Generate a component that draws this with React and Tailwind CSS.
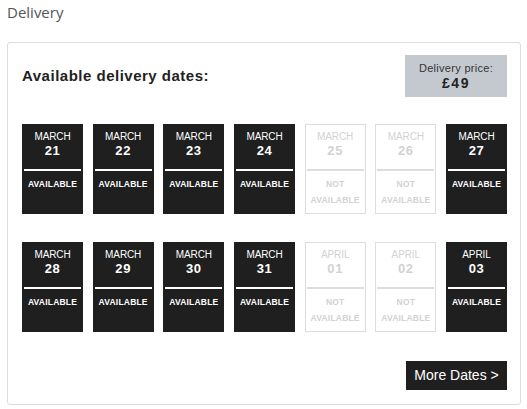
import React from "react";

const rows = [
  [
    { m: "MARCH", d: "21", a: true },
    { m: "MARCH", d: "22", a: true },
    { m: "MARCH", d: "23", a: true },
    { m: "MARCH", d: "24", a: true },
    { m: "MARCH", d: "25", a: false },
    { m: "MARCH", d: "26", a: false },
    { m: "MARCH", d: "27", a: true },
  ],
  [
    { m: "MARCH", d: "28", a: true },
    { m: "MARCH", d: "29", a: true },
    { m: "MARCH", d: "30", a: true },
    { m: "MARCH", d: "31", a: true },
    { m: "APRIL", d: "01", a: false },
    { m: "APRIL", d: "02", a: false },
    { m: "APRIL", d: "03", a: true },
  ],
];

function Tile({ m, d, a }) {
  return (
    <div
      className={
        "h-[90px] flex flex-col items-stretch text-center " +
        (a
          ? "bg-[#1f1f1f] text-white pt-[7px]"
          : "bg-white border border-[#dddddd] text-[#d2d2d2] pt-[6px]")
      }
    >
      <div className="text-[10px] leading-[12px] tracking-[-0.1px]">{m}</div>
      <div className="text-[13px] leading-[16px] font-bold tracking-[0.6px]">{d}</div>
      <div
        className={
          "mt-[10px] h-[2px] " + (a ? "bg-white mx-[2px]" : "bg-[#dddddd] mx-[1px]")
        }
      />
      <div className="mt-[5px] text-[8.5px] leading-[16px] font-bold tracking-[0.2px]">
        {a ? (
          "AVAILABLE"
        ) : (
          <>
            NOT
            <br />
            AVAILABLE
          </>
        )}
      </div>
    </div>
  );
}

export default function App() {
  return (
    <div className="w-[527px] h-[409px] bg-white" style={{ fontFamily: '"Liberation Sans", Arial, sans-serif' }}>
      <div
        className="pl-[7px] pt-[2px] text-[15px] leading-[20px] text-[#555555]"
        style={{ fontFamily: '"Open Sans", sans-serif' }}
      >
        Delivery
      </div>
      <div className="ml-[7px] mt-[20px] w-[514px] border border-[#dddddd] rounded-[3px] pl-[14px] pr-[13px] pt-[12px] pb-[14px]">
        <div className="flex items-center justify-between h-[42px]">
          <div className="text-[15px] font-bold text-[#222222] tracking-[0.5px]">
            Available delivery dates:
          </div>
          <div className="w-[102px] h-[42px] bg-[#c4c9d0] flex flex-col items-center justify-center text-[#333333]">
            <div className="text-[11px] leading-[14px] tracking-[0.3px]">Delivery price:</div>
            <div className="text-[14px] leading-[17px] font-bold tracking-[1.5px] text-[#222222]">£49</div>
          </div>
        </div>
        <div className="mt-[27px] grid grid-cols-7 gap-x-[9.67px] gap-y-[28px]">
          {rows.flat().map((t, i) => (
            <Tile key={i} {...t} />
          ))}
        </div>
        <div className="mt-[29px] flex justify-end">
          <div className="w-[101px] h-[29px] bg-[#1f1f1f] text-white text-[14px] flex items-center justify-center">
            More Dates &gt;
          </div>
        </div>
      </div>
    </div>
  );
}
